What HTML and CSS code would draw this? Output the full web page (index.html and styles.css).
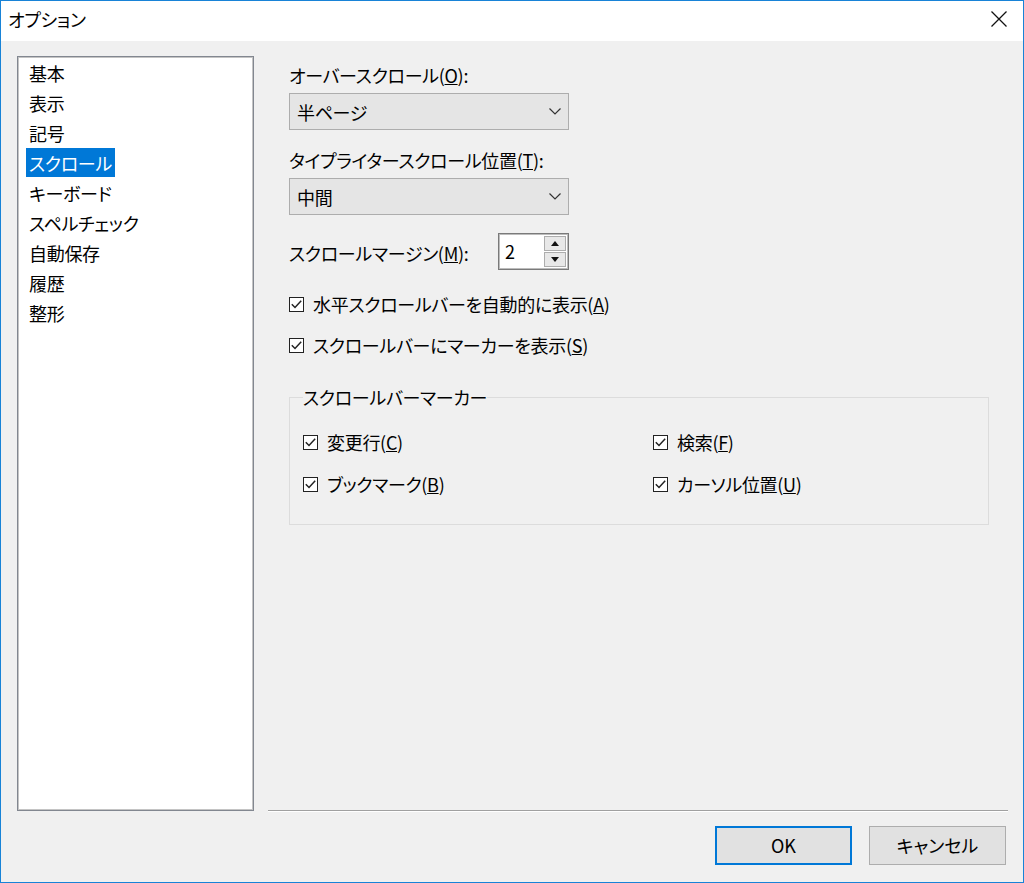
FILE: index.html
```html
<!DOCTYPE html>
<html lang="ja">
<head>
    <meta charset="UTF-8">
    <title>オプション</title>
    <link rel="stylesheet" href="styles.css">
</head>
<body>
    <div class="window">
        <div class="titlebar">
            <span class="title">オプション</span>
            <svg class="close" width="16" height="16" viewBox="0 0 16 16">
                <path d="M0.5 0.5 L15.5 15.5 M15.5 0.5 L0.5 15.5" stroke="#111" stroke-width="1.3" fill="none"/>
            </svg>
        </div>

        <div class="main">
            <!-- category list -->
            <ul class="nav">
                <li><span>基本</span></li>
                <li><span>表示</span></li>
                <li><span>記号</span></li>
                <li class="selected"><span>スクロール</span></li>
                <li><span>キーボード</span></li>
                <li><span>スペルチェック</span></li>
                <li><span>自動保存</span></li>
                <li><span>履歴</span></li>
                <li><span>整形</span></li>
            </ul>

            <div class="panel">
                <div class="label">オーバースクロール(<u>O</u>):</div>
                <div class="combo">
                    <span>半ページ</span>
                    <svg class="chevron" width="12" height="7" viewBox="0 0 12 7"><path d="M0.5 0.5 L6 6 L11.5 0.5" stroke="#333" stroke-width="1.2" fill="none"/></svg>
                </div>

                <div class="label gap-top">タイプライタースクロール位置(<u>T</u>):</div>
                <div class="combo">
                    <span>中間</span>
                    <svg class="chevron" width="12" height="7" viewBox="0 0 12 7"><path d="M0.5 0.5 L6 6 L11.5 0.5" stroke="#333" stroke-width="1.2" fill="none"/></svg>
                </div>

                <div class="spin-row">
                    <div class="spin-label">スクロールマージン(<u>M</u>):</div>
                    <div class="spin">
                        <span class="spin-value">2</span>
                        <div class="spin-buttons">
                            <div class="spin-btn"><svg width="8" height="5" viewBox="0 0 8 5"><path d="M0 5 L4 0 L8 5 Z" fill="#111"/></svg></div>
                            <div class="spin-btn"><svg width="8" height="5" viewBox="0 0 8 5"><path d="M0 0 L4 5 L8 0 Z" fill="#111"/></svg></div>
                        </div>
                    </div>
                </div>

                <label class="check first-check">
                    <svg class="box" width="15" height="15" viewBox="0 0 15 15"><rect x="0.5" y="0.5" width="14" height="14" fill="#fff" stroke="#222"/><path d="M2.8 7.3 L6 10.5 L12.2 3.8" stroke="#222" stroke-width="1.5" fill="none"/></svg>
                    <span>水平スクロールバーを自動的に表示(<u>A</u>)</span>
                </label>
                <label class="check second-check">
                    <svg class="box" width="15" height="15" viewBox="0 0 15 15"><rect x="0.5" y="0.5" width="14" height="14" fill="#fff" stroke="#222"/><path d="M2.8 7.3 L6 10.5 L12.2 3.8" stroke="#222" stroke-width="1.5" fill="none"/></svg>
                    <span>スクロールバーにマーカーを表示(<u>S</u>)</span>
                </label>

                <fieldset class="group">
                    <legend>スクロールバーマーカー</legend>
                    <div class="group-grid">
                        <label class="check">
                            <svg class="box" width="15" height="15" viewBox="0 0 15 15"><rect x="0.5" y="0.5" width="14" height="14" fill="#fff" stroke="#222"/><path d="M2.8 7.3 L6 10.5 L12.2 3.8" stroke="#222" stroke-width="1.5" fill="none"/></svg>
                            <span>変更行(<u>C</u>)</span>
                        </label>
                        <label class="check">
                            <svg class="box" width="15" height="15" viewBox="0 0 15 15"><rect x="0.5" y="0.5" width="14" height="14" fill="#fff" stroke="#222"/><path d="M2.8 7.3 L6 10.5 L12.2 3.8" stroke="#222" stroke-width="1.5" fill="none"/></svg>
                            <span>検索(<u>F</u>)</span>
                        </label>
                        <label class="check">
                            <svg class="box" width="15" height="15" viewBox="0 0 15 15"><rect x="0.5" y="0.5" width="14" height="14" fill="#fff" stroke="#222"/><path d="M2.8 7.3 L6 10.5 L12.2 3.8" stroke="#222" stroke-width="1.5" fill="none"/></svg>
                            <span>ブックマーク(<u>B</u>)</span>
                        </label>
                        <label class="check">
                            <svg class="box" width="15" height="15" viewBox="0 0 15 15"><rect x="0.5" y="0.5" width="14" height="14" fill="#fff" stroke="#222"/><path d="M2.8 7.3 L6 10.5 L12.2 3.8" stroke="#222" stroke-width="1.5" fill="none"/></svg>
                            <span>カーソル位置(<u>U</u>)</span>
                        </label>
                    </div>
                </fieldset>
            </div>
        </div>

        <div class="footer">
            <button class="btn default">OK</button>
            <button class="btn">キャンセル</button>
        </div>
    </div>
</body>
</html>
```

FILE: styles.css
```css
* {
    box-sizing: border-box;
}

body {
    margin: 0;
    padding: 0;
    font-family: "Noto Sans CJK JP", "Noto Sans", sans-serif;
    font-size: 18px;
    font-feature-settings: "palt";
    letter-spacing: -0.3px;
    color: #000;
}

.window {
    width: 1024px;
    height: 883px;
    border: 1px solid #1883d7;
    background-color: #f0f0f0;
    display: flex;
    flex-direction: column;
}

.titlebar {
    height: 40px;
    background-color: #fff;
    display: flex;
    align-items: center;
    justify-content: space-between;
    padding: 0 16px 4px 7px;
}

.title {
    font-size: 18px;
    line-height: 20px;
}

.main {
    display: grid;
    grid-template-columns: 237px 740px;
    column-gap: 14px;
    padding: 15px 15px 0 16px;
    height: 770px;
}

/* category list */
.nav {
    list-style: none;
    margin: 0;
    padding: 1px 0 0 8px;
    background-color: #fff;
    border: 1px solid #828790;
    box-shadow: inset 0 0 0 1px #c4c4c4;
}

.nav li {
    line-height: 30px;
    height: 30px;
}

.nav li span {
    display: inline-block;
    padding: 0 3px;
    height: 29px;
}

.nav li.selected span {
    background-color: #0078d7;
    color: #fff;
}

/* right side */
.panel {
    display: flex;
    flex-direction: column;
    align-items: flex-start;
    padding: 9px 0 0 21px;
    border-bottom: 1px solid #a0a0a0;
    box-shadow: 0 1px 0 #fff;
}

.label {
    line-height: 20px;
    height: 20px;
}

.gap-top {
    margin-top: 20px;
}

.combo {
    margin-top: 8px;
    width: 280px;
    height: 37px;
    background-color: #e5e5e5;
    border: 1px solid #adadad;
    display: flex;
    align-items: center;
    justify-content: space-between;
    padding: 0 7px 0 7px;
    line-height: 20px;
}

.spin-row {
    margin-top: 18px;
    display: flex;
    align-items: center;
    height: 37px;
}

.spin-label {
    width: 209px;
    line-height: 20px;
    padding-top: 3px;
}

.spin {
    width: 71px;
    height: 37px;
    background-color: #fff;
    border: 1px solid #7a7a7a;
    box-shadow: inset 0 0 0 1px #bcbcbc;
    display: flex;
    align-items: center;
    justify-content: space-between;
    padding: 0 2px 0 6px;
}

.spin-value {
    line-height: 20px;
    padding-bottom: 2px;
}

.spin-buttons {
    display: flex;
    flex-direction: column;
    gap: 1px;
}

.spin-btn {
    width: 22px;
    height: 15px;
    background-color: #e8e8e8;
    border: 1px solid #adadad;
    display: flex;
    align-items: center;
    justify-content: center;
}

.check {
    display: flex;
    align-items: center;
    gap: 9px;
    height: 20px;
    line-height: 20px;
}

.check .box {
    flex: none;
}

.first-check {
    margin-top: 24px;
}

.second-check {
    margin-top: 21px;
}

.group {
    margin: 32px 0 0 0;
    width: 700px;
    border: 1px solid #dcdcdc;
    padding: 25px 13px 30px 13px;
}

.group legend {
    padding: 0;
    line-height: 20px;
}

.group-grid {
    display: grid;
    grid-template-columns: 350px 1fr;
    row-gap: 22px;
}

/* buttons */
.footer {
    display: flex;
    justify-content: flex-end;
    gap: 17px;
    padding: 15px 17px 0 0;
}

.btn {
    width: 137px;
    height: 39px;
    background-color: #e1e1e1;
    border: 1px solid #adadad;
    font-family: inherit;
    font-size: 18px;
    font-feature-settings: "palt";
    color: #000;
    padding: 0 0 2px 0;
}

.btn.default {
    border: 2px solid #0078d7;
}
```
